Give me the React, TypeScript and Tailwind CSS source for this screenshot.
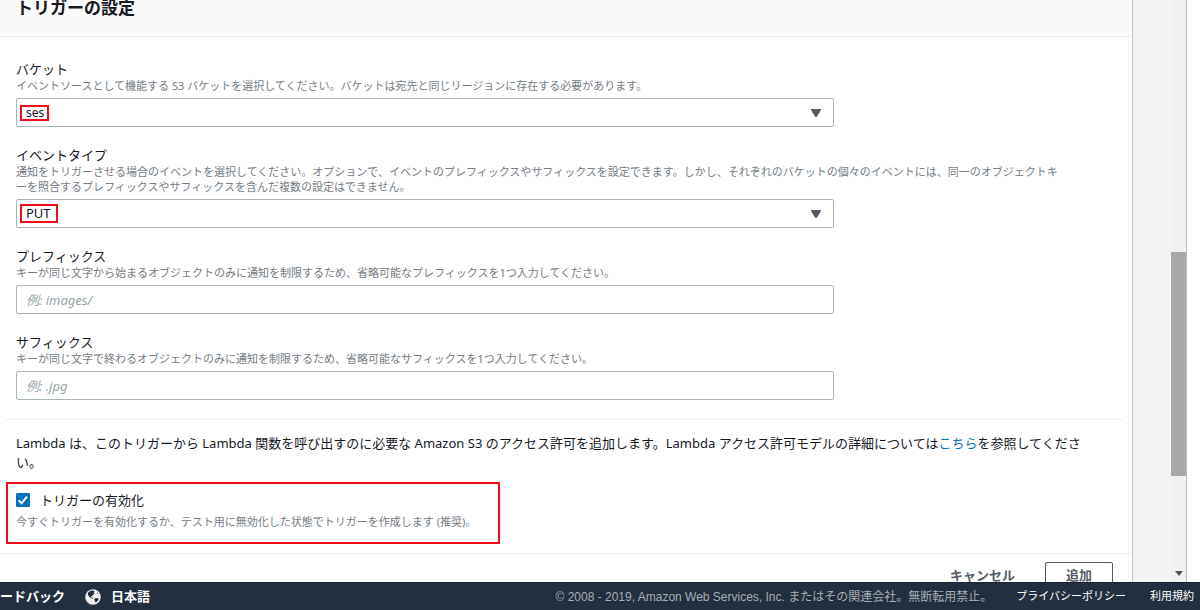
import type { ReactNode } from 'react';

function Globe() {
  return (
    <svg viewBox="0 0 16 16" className="h-4 w-4" aria-hidden="true">
      <circle cx="8" cy="8" r="7.8" fill="#ececec" />
      <path
        fill="#232f3e"
        d="M3.2 3.4 5.4 1.8 8.6 1.6 9.6 2.8 8.6 3.4 9.8 4.4 8.2 5.6 7.2 7 5.8 7.2 6.6 8.4 8.2 8.8 8 9.6 6 9 4 7.4 2.8 5.4zM10.6 9.2 12.8 9 13.6 10.2 12.2 12.4 10.6 13.4 9.6 11.6 9.2 10zM12 3.2 13.4 4.6 12.6 5z"
      />
    </svg>
  );
}

function Field({ id, label, hint, children }: { id: string; label: string; hint: ReactNode; children: ReactNode }) {
  return (
    <div className="flex flex-col">
      <label htmlFor={id} className="text-[13px] leading-[18px] text-[#16191f]">{label}</label>
      <p id={id + '-hint'} className="mb-[5px] text-[11px] leading-[15px] text-[#757c84]">{hint}</p>
      {children}
    </div>
  );
}

const control =
  'block h-[29px] w-full appearance-none rounded-[2px] border border-[#aab7b8] bg-white px-[9px] text-[#16191f] outline-none placeholder:italic placeholder:text-[#95a5a6]';

function Select({ id, value, size, mark }: { id: string; value: string; size: string; mark: string }) {
  return (
    <div className="relative w-full max-w-[818px]">
      <select id={id} aria-describedby={id + '-hint'} className={control + ' ' + size} defaultValue={value}>
        <option>{value}</option>
      </select>
      <svg viewBox="0 0 10 8" className="pointer-events-none absolute top-[11px] right-[13px] h-2 w-[10px]" fill="#545b64">
        <path d="M0 0h10v1L5.6 8H4.4L0 1z" />
      </svg>
      <span className={'pointer-events-none absolute left-1 border-2 border-[#f00c18] ' + mark} />
    </div>
  );
}

function TextField({ id, placeholder }: { id: string; placeholder: string }) {
  return (
    <div className="w-full max-w-[818px]">
      <input id={id} type="text" aria-describedby={id + '-hint'} placeholder={placeholder} className={control + ' text-[13px]'} />
    </div>
  );
}

export default function App() {
  return (
    <div className="flex h-screen flex-col overflow-hidden bg-white font-['Noto_Sans','Noto_Sans_CJK_JP',sans-serif]">
      <div className="flex min-h-0 flex-1 pr-[13px]">
        <div className="flex min-w-0 flex-1 overflow-hidden bg-[#f2f3f3]">
          <main className="min-w-0 flex-1 border-r border-[#bcc4c5] bg-white">
            <header className="border-b border-[#eaeded] bg-[#fafafa] px-4 pb-5">
              <h2 className="text-[17px] leading-4 font-bold text-[#16191f]">トリガーの設定</h2>
            </header>

            <form onSubmit={(e) => e.preventDefault()}>
              <div className="flex flex-col gap-[19px] px-4 pt-[23px]">
                <Field
                  id="bucket"
                  label="バケット"
                  hint="イベントソースとして機能する S3 バケットを選択してください。バケットは宛先と同じリージョンに存在する必要があります。"
                >
                  <Select id="bucket" value="ses" size="text-[12px]" mark="top-[7px] h-4 w-[29px]" />
                </Field>
                <Field
                  id="event"
                  label="イベントタイプ"
                  hint={
                    <>
                      通知をトリガーさせる場合のイベントを選択してください。オプションで、イベントのプレフィックスやサフィックスを設定できます。しかし、それぞれのバケットの個々のイベントには、同一のオブジェクトキ
                      <br />
                      ーを照合するプレフィックスやサフィックスを含んだ複数の設定はできません。
                    </>
                  }
                >
                  <Select id="event" value="PUT" size="text-[13px]" mark="top-[5px] h-[19px] w-[38px]" />
                </Field>
                <Field
                  id="prefix"
                  label="プレフィックス"
                  hint="キーが同じ文字から始まるオブジェクトのみに通知を制限するため、省略可能なプレフィックスを1つ入力してください。"
                >
                  <TextField id="prefix" placeholder="例: images/" />
                </Field>
                <Field
                  id="suffix"
                  label="サフィックス"
                  hint="キーが同じ文字で終わるオブジェクトのみに通知を制限するため、省略可能なサフィックスを1つ入力してください。"
                >
                  <TextField id="suffix" placeholder="例: .jpg" />
                </Field>
              </div>

              <hr className="mt-[19px] mr-[10px] ml-[6px] border-[#eaeded]" />

              <p className="mt-[14px] px-4 text-[13px] leading-[19px] text-[#16191f]">
                Lambda は、このトリガーから Lambda 関数を呼び出すのに必要な Amazon S3 のアクセス許可を追加します。Lambda アクセス許可モデルの詳細については
                <a href="#permissions" className="text-[#0073bb]">こちら</a>を参照してくださ
                <br />
                い。
              </p>

              <div className="mt-[10px] ml-[6px] w-[494px] max-w-full border-2 border-[#f00c18] px-2 pt-[7px] pb-[13px]">
                <div className="flex items-center gap-[10px]">
                  <span className="relative h-[14px] w-[14px]">
                    <input
                      id="enable"
                      type="checkbox"
                      defaultChecked
                      aria-describedby="enable-hint"
                      className="peer block h-[14px] w-[14px] appearance-none rounded-[1px] border border-[#0073bb] bg-white checked:bg-[#0073bb]"
                    />
                    <svg viewBox="0 0 14 14" className="pointer-events-none absolute inset-0 hidden h-[14px] w-[14px] peer-checked:block" fill="none" stroke="#fff" strokeWidth="2">
                      <path d="M2.6 7.2 5.6 10.2 11 3.6" />
                    </svg>
                  </span>
                  <label htmlFor="enable" className="text-[13px] leading-[18px] text-[#16191f]">トリガーの有効化</label>
                </div>
                <p id="enable-hint" className="mt-[5px] text-[11px] leading-[15px] text-[#757c84]">
                  今すぐトリガーを有効化するか、テスト用に無効化した状態でトリガーを作成します (推奨)。
                </p>
              </div>

              <div className="mt-[9px] flex items-start justify-end gap-[30px] border-t border-[#eaeded] pt-2 pr-[19px] text-[13px] font-bold text-[#545b64]">
                <button type="button" className="h-[28px]">キャンセル</button>
                <button type="submit" className="h-[28px] w-[68px] rounded-[2px] border border-[#545b64]">追加</button>
              </div>
            </form>
          </main>
          <div className="w-[38px] shrink-0" />
          <div className="flex w-[15px] shrink-0 flex-col items-center bg-[#f0f0f0] pb-1">
            <div className="h-[252px] shrink-0" />
            <div className="h-[224px] w-full shrink-0 bg-[#a8a8a8]" />
            <div className="flex-1" />
            <svg viewBox="0 0 8 5" className="mb-[2px] h-[5px] w-2" fill="#505050">
              <path d="M0 0h8L4 5z" />
            </svg>
          </div>
          <div className="w-px shrink-0 bg-[#b4bebe]" />
        </div>
      </div>

      <footer className="flex h-7 shrink-0 items-center justify-between overflow-hidden border-t border-[#1a222e] bg-[#232f3e] pr-[6px] whitespace-nowrap text-white">
        <div className="flex items-center text-[13px] font-bold">
          <a href="#feedback">ードバック</a>
          <button type="button" className="ml-5 flex items-center gap-[10px]">
            <Globe />
            日本語
          </button>
        </div>
        <div className="flex items-center gap-6 font-['Liberation_Sans','Noto_Sans_CJK_JP',sans-serif] text-[11px]">
          <span className="text-[12px] text-[#a5acb3]">© 2008 - 2019, Amazon Web Services, Inc. またはその関連会社。無断転用禁止。</span>
          <a href="#privacy">プライバシーポリシー</a>
          <a href="#terms">利用規約</a>
        </div>
      </footer>
    </div>
  );
}
